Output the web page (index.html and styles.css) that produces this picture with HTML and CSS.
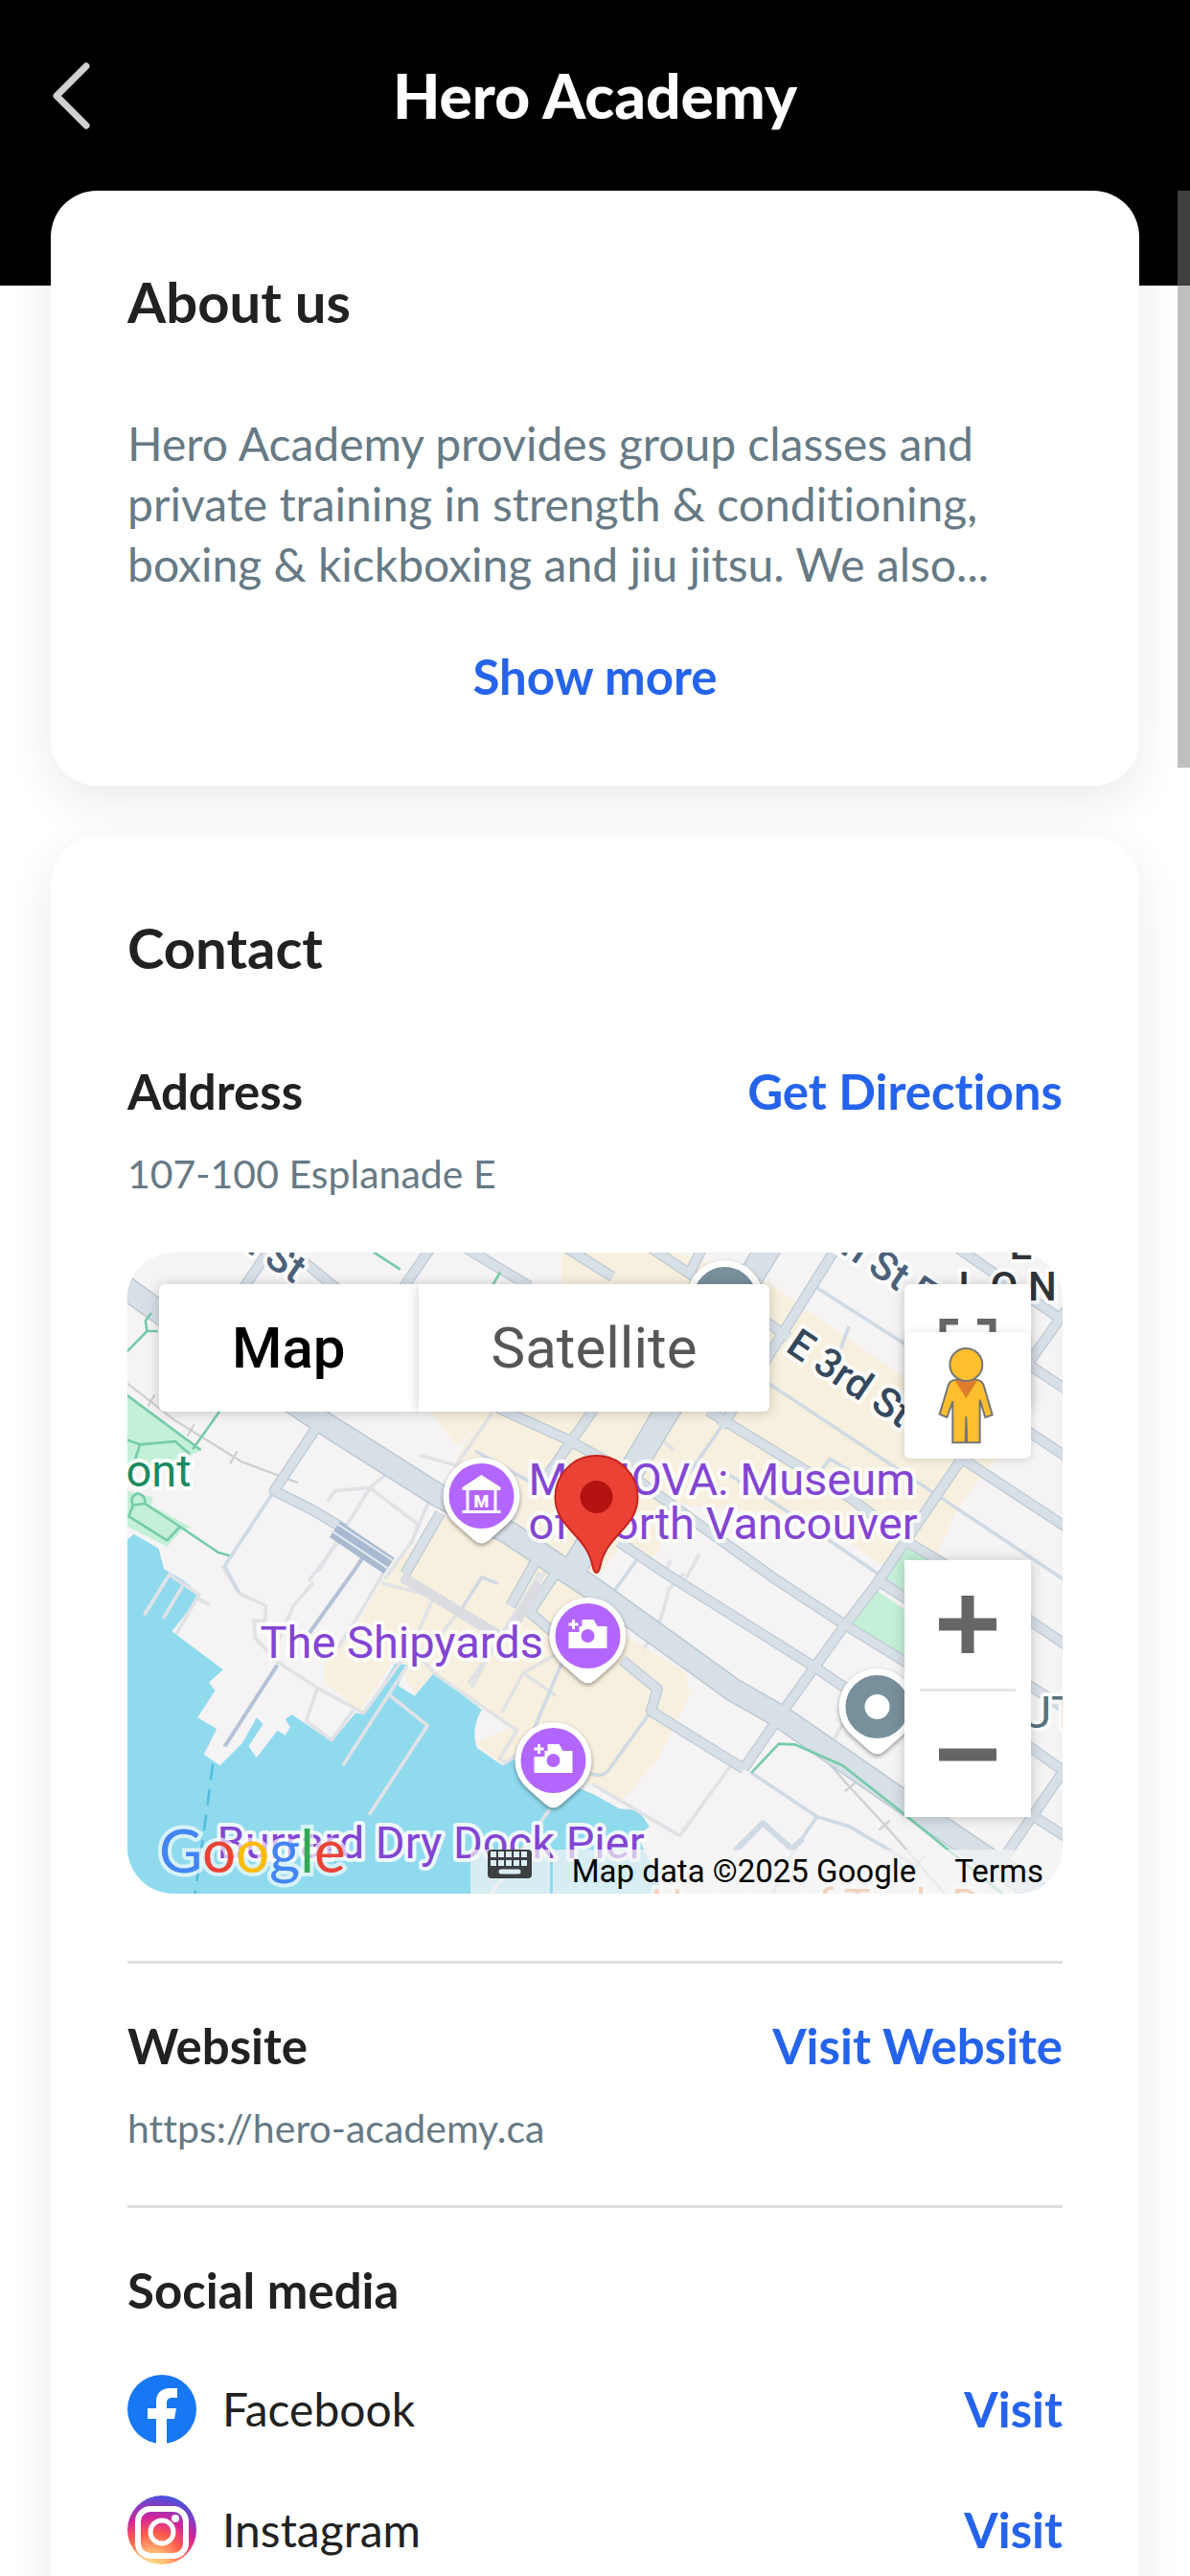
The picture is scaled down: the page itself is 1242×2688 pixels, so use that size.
FILE: index.html
```html
<!DOCTYPE html>
<html lang="en">
<head>
    <meta charset="UTF-8">
    <meta name="viewport" content="width=device-width, initial-scale=1.0">
    <title>Hero Academy</title>
    <link rel="stylesheet" href="styles.css">
</head>
<body>
    <div class="app">
        <header class="topbar">
            <button class="back" type="button" aria-label="Back">
                <svg viewBox="0 0 44 72" width="44" height="72"><path d="M38 5L7 36l31 31"/></svg>
            </button>
            <h1>Hero Academy</h1>
        </header>

        <main class="content">
            <section class="card">
                <h2>About us</h2>
                <p class="about">Hero Academy provides group classes and<br>private training in strength &amp; conditioning,<br>boxing &amp; kickboxing and jiu jitsu. We also...</p>
                <button class="action show-more" type="button">Show more</button>
            </section>

            <section class="card">
                <h2>Contact</h2>

                <div class="row">
                    <h3>Address</h3>
                    <a class="action" href="#">Get Directions</a>
                </div>
                <p class="detail">107-100 Esplanade E</p>

                <div class="map">
                    <svg class="map-canvas" viewBox="0 0 977 669" preserveAspectRatio="xMidYMid slice">
                        <defs>
                            <path id="pin" d="M-40 0A40 40 0 1 1 40 0C40 13 34 23 26 30L8 46Q0 53-8 46L-26 30C-34 23-40 13-40 0Z"/>
                            <g id="camera">
                                <circle r="34" fill="#b366ff"/>
                                <path d="M-20-4V13H20V-10H10L6-17H-6V-10H-9V-4Z" fill="#fff"/>
                                <path d="M-15-17v10M-20-12h10" stroke="#fff" stroke-width="3"/>
                                <circle r="7" fill="#b366ff"/>
                            </g>
                            <g id="wide">
                                <path d="M-20 125L140 240L620 565L1010 812L1240 935L1500 1108L1940 1425L2090 1510L2480 1780L2969 2110"/>
                            </g>
                            <g id="avenue">
                                <path d="M2060 20L1700 600L1440 1040"/>
                            </g>
                            <g id="streets">
                                <path d="M2250 54L2040 390L1900 600"/>
                                <path d="M2700 630L2380 1100L2280 1230L2100 1480L1970 1670"/>
                                <path d="M2990 220L2840 430"/>
                                <path d="M2990 1650L2790 1940"/>
                                <path d="M480 54L400 170"/>
                                <path d="M990 40L900 170"/>
                                <path d="M640 590L500 800L620 860L720 920"/>
                                <path d="M1500 545L1350 760"/>
                                <path d="M1020 870L910 1060"/>
                                <path d="M540 40L700 170"/>
                                <path d="M1100 40L1300 160"/>
                                <path d="M1400 30L1560 130"/>
                                <path d="M1680 40L1800 120L2040 270L2110 320"/>
                                <path d="M1800 120L1840 40"/>
                                <path d="M1200 540L1420 640L1600 740L2060 1070L2280 1215L2500 1350"/>
                                <path d="M1860 550L2300 820L2500 970L2700 1090"/>
                                <path d="M1580 960L1720 1055L2190 1350L2300 1425"/>
                                <path d="M1590 1330L1700 1420L1680 1490L1970 1670"/>
                                <path d="M2640 40L2800 150L2960 260"/>
                                <path d="M2840 390L2990 490"/>
                                <path d="M2840 600L2990 700"/>
                                <path d="M2640 690L2990 920"/>
                                <path d="M2380 1075L2500 1150"/>
                                <path d="M2850 1195L2990 1290"/>
                                <path d="M2850 1400L2990 1490"/>
                                <path d="M2850 1590L2990 1690"/>
                                <path d="M2880 1820L2990 1890"/>
                                <path d="M1250 940L1330 1000L1240 1160M1380 1060L1300 1180L1370 1240"/>
                            </g>
                        </defs>

                        <rect width="977" height="669" fill="#f5f3f4"/>
                        <g class="ground" transform="translate(-13 -18) scale(.33333)">
                            <!-- built-up areas -->
                            <path fill="#f7f0de" d="M1400 54H1760L2040 145L2480 450L2760 700L2640 850L2560 1035L2390 1025L2190 880L1930 860L1760 840L1700 1000L1650 1020L1580 980L1500 1080L1240 930L1270 860L1130 860L1060 720L1125 605L1075 660L985 552H1400Z"/>
                            <path fill="#f7f0de" d="M1040 880L890 1020L840 1080L740 1250L655 1340L660 1400L770 1490L880 1320L940 1440L1000 1370L1240 1540L1130 1590L1215 1660L1350 1640L1590 1770L1700 1640L1750 1540L1800 1440L1790 1370L1610 1260L1500 1140L1250 960Z"/>
                            <!-- parks -->
                            <g fill="#c3f0d6">
                                <path d="M38 500L275 672L235 690L200 720L38 730Z"/>
                                <path d="M38 800L120 820L115 845L240 915L210 925L165 975L38 910Z"/>
                                <path d="M2480 965L2640 1060L2520 1170L2400 1090Z"/>
                                <path d="M2385 1110L2500 1190L2500 1350L2310 1220Z"/>
                            </g>
                            <!-- water -->
                            <path fill="#90daee" d="M38 955L60 935L138 980L155 1045L215 1080L270 1125L180 1240L340 1360L295 1400L315 1425L260 1510L320 1545L280 1625L330 1660L400 1590L445 1510L465 1530L420 1600L445 1635L510 1550L535 1565L550 1540L535 1515L555 1500L680 1585L755 1495L780 1500L880 1340L915 1345L888 1410L940 1442L1000 1370L1150 1485C1130 1520 1120 1560 1135 1605L1215 1660L1250 1640L1380 1700L1500 1750L1580 1795L1640 1800L1675 1850L1640 1880L1660 1930L1700 2000L1710 2061H38Z"/>

                            <!-- footpaths and piers -->
                            <g fill="none" stroke="#e1e2e6" stroke-width="11" stroke-linejoin="round" stroke-linecap="round">
                                <path d="M95 1185L172 1062L265 1125L195 1245M155 1195L215 1095M265 1140L295 1155"/>
                                <path d="M862 1440L980 1535L800 1810M915 1350L718 1655"/>
                                <path d="M510 1335L640 1420L780 1495L900 1330M635 1420L600 1520L680 1580L745 1490"/>
                                <path d="M340 1040L390 1120L475 1160L470 1210L435 1205L440 1260L510 1335"/>
                                <path d="M670 830L690 800L800 790L860 740M800 790L950 905L930 965M700 960L610 1080M800 790L640 1050M990 820L930 960L850 1070"/>
                                <path d="M620 1090L560 1160L500 1300M840 1060L770 1180L700 1290"/>
                                <path d="M960 690L1070 720L1180 560M840 1090L1000 1130L930 1290L1000 1370L1260 1550L1205 1640L1225 1650L1350 1560"/>
                                <path d="M1070 1190L930 1360M1080 1190L1200 1270L1110 1400M1330 1060L1200 1270L1120 1410M1420 1290L1280 1370L1215 1490M1350 1050L1240 1240M1280 1370L1380 1440"/>
                                <path d="M1780 1060L1735 1110L1720 1170L1700 1230L1660 1290M1500 1720L1770 1880L1930 1660"/>
                                <path d="M1700 630L1750 670M1740 1020L1720 1060M1830 1000L1775 1100M2280 1530L2255 1575M1360 1800L1180 2061"/>
                            </g>

                            <!-- railway -->
                            <path fill="none" stroke="#cfcfd3" stroke-width="7" d="M38 462L190 580L400 710L575 775M105 535L125 500M228 628L250 592M362 715L385 675M2190 1600L2300 1725L2420 1855L2600 2061M2288 1740L2322 1712M2394 1862L2428 1832M2505 1975L2535 1945"/>
                            <!-- lanes -->
                            <g fill="none" stroke="#d0dae4" stroke-width="11" stroke-linejoin="round">
                                <path d="M500 800L345 1035L390 1120"/>
                                <path d="M2200 165L2490 350M2050 465L2540 790L2990 1090"/>
                                <path d="M2180 780L2240 700L2335 755M2260 390L2300 285"/>
                                <path d="M1680 1490L1550 1670Q1530 1700 1490 1685"/>
                                <path d="M1990 1680L2200 1820L2300 1850L2520 1980M2200 1820L2130 1920L2060 2061"/>
                                <path d="M1400 1340L1320 1530L1290 1600M1200 1090L1150 1070L1080 1180"/>
                                <path d="M1640 1010L1560 1120M1910 740L2100 860L2450 1100"/>
                                <path d="M1910 585L1740 830M1130 675L1350 800"/>
                                <path stroke-width="18" d="M1940 1930L2030 1840L2120 1920L2155 1890"/>
                                <path stroke-width="12" stroke="#b3c2d6" d="M345 1600L510 1345M610 1245L750 1050L790 990"/>
                            </g>
                            <use href="#streets" class="edge edge-street"/>
                            <use href="#avenue" class="edge edge-avenue"/>
                            <use href="#wide" class="edge edge-wide"/>
                            <use href="#streets" class="fill fill-street"/>
                            <use href="#avenue" class="fill fill-avenue"/>
                            <use href="#wide" class="fill fill-wide"/>
                            <path fill="none" stroke="#dadce2" stroke-width="32" d="M900 1070L1200 1250M1330 1090L1250 1220"/>
                            <!-- station -->
                            <g fill="none" stroke="#a9bad0">
                                <path stroke-width="60" d="M690 920L860 1035"/>
                                <path stroke="#e4e9f0" stroke-width="6" d="M680 925L860 1045M700 905L875 1020"/>
                            </g>
                            <!-- park trails -->
                            <g fill="none" stroke="#76cbaa" stroke-width="8" stroke-linejoin="round">
                                <path d="M38 500L270 672M38 640L80 655L190 645L235 685M80 655L65 700M330 550L245 670"/>
                                <path d="M115 243L97 268L102 300L135 300M102 300L38 365M810 52L895 107M1208 115L1185 155"/>
                                <path d="M58 845L95 840L205 912L165 955L45 880ZM205 912L325 993L360 1003M58 845Q45 820 72 808Q100 815 95 840"/>
                                <path d="M1995 1682L2080 1592L2130 1594L2280 1660L2470 1810L2780 2061"/>
                            </g>
                            <path fill="none" stroke="#52bede" stroke-width="8" stroke-dasharray="50 30" d="M308 1655L285 1830L252 2061"/>
                        </g>

                        <!-- place labels -->
                        <g class="labels">
                            <text class="street" transform="translate(102 -16) rotate(34)">th St</text>
                            <text class="street" transform="translate(732 -8) rotate(34)">th St E</text>
                            <text class="street main" transform="translate(686 102) rotate(34)">E 3rd St</text>
                            <text class="district" x="921" y="7">E</text>
                            <text class="district" x="868" y="50">L O N</text>
                            <text class="green" x="-1" y="244">ont</text>
                            <text class="slate" x="934" y="496">UT</text>
                            <text class="food" x="547" y="697">House of Tech D</text>
                            <text x="419" y="253">MONOVA: Museum</text>
                            <text x="419" y="299">of North Vancouver</text>
                            <text x="139" y="423">The Shipyards</text>
                            <text x="94" y="632">Burrard Dry Dock Pier</text>
                        </g>

                        <g transform="translate(370 254)">
                            <use href="#pin" class="pin"/>
                            <circle r="34" fill="#b366ff"/>
                            <path fill="#fff" d="M-20-9L0-22L20-9V-6H16V15H20V18H-20V15H-16V-6H-20ZM-13-6V15H13V-6Z" fill-rule="evenodd"/>
                            <text class="museum" x="0" y="12">M</text>
                        </g>
                        <g transform="translate(481 400)"><use href="#pin" class="pin"/><use href="#camera"/></g>
                        <g transform="translate(445 530)"><use href="#pin" class="pin"/><use href="#camera"/></g>
                        <g transform="translate(783 474)"><use href="#pin" class="pin"/><circle r="23" fill="#fff" stroke="#78909c" stroke-width="20"/></g>
                        <g transform="translate(624 48)"><use href="#pin" class="pin"/><circle r="23" fill="#fff" stroke="#78909c" stroke-width="20"/></g>

                        <g transform="translate(490 255)">
                            <path d="M0 79C-2 79-3 77-4 72C-11 38-43 33-43 0A43 43 0 0 1 43 0C43 33 11 38 4 72C3 77 2 79 0 79Z" fill="#ea4335" stroke="#c5221f" stroke-width="2"/>
                            <circle r="17" fill="#b31412"/>
                        </g>
                    </svg>

                    <div class="map-types">
                        <button class="map-type active" type="button">Map</button>
                        <button class="map-type" type="button">Satellite</button>
                    </div>

                    <div class="map-tools">
                        <button class="tool fullscreen" type="button" aria-label="Fullscreen">
                            <svg viewBox="0 0 60 60" width="60" height="60"><path d="M4 20V3H20M40 3H56V20M56 40V57H40M20 57H4V40"/></svg>
                        </button>
                        <button class="tool pegman" type="button" aria-label="Street View">
                            <svg viewBox="972 303 396 396" width="132" height="132">
                                <path d="M1130 453Q1113 455 1109 470L1082 560L1105 570L1123 520V649H1163L1165 568L1168 649H1208V515L1225 570L1247 562L1220 470Q1215 455 1200 453Z" fill="#fdbf2d" stroke="#757575" stroke-width="6"/>
                                <path d="M1130 454H1201L1165 510Z" fill="#e07d2d"/>
                                <circle cx="1165" cy="405" r="51" fill="#fdbf2d" stroke="#757575" stroke-width="6"/>
                            </svg>
                        </button>
                    </div>

                    <div class="map-zoom">
                        <button type="button" aria-label="Zoom in">
                            <svg viewBox="0 0 60 60" width="60" height="60"><path d="M30 0V60M0 30H60"/></svg>
                        </button>
                        <button type="button" aria-label="Zoom out">
                            <svg viewBox="0 0 60 60" width="60" height="60"><path d="M0 30H60"/></svg>
                        </button>
                    </div>

                    <a class="google" href="#" aria-label="Google"><span class="b">G</span><span class="r">o</span><span class="y">o</span><span class="b">g</span><span class="g">l</span><span class="r">e</span></a>

                    <div class="map-footer">
                        <button class="keys" type="button" aria-label="Keyboard shortcuts">
                            <svg viewBox="0 0 46 30" width="46" height="30">
                                <rect width="46" height="30" rx="4" fill="#3c4043"/>
                                <path d="M3 5H43M3 14H43" stroke="#dceef3" stroke-width="6" stroke-dasharray="6 2"/>
                                <path d="M14 23H32" stroke="#dceef3" stroke-width="5" stroke-linecap="round"/>
                            </svg>
                        </button>
                        <div class="legal">
                            <span>Map data ©2025 Google</span>
                            <a href="#">Terms</a>
                        </div>
                    </div>
                </div>

                <hr class="after-map">

                <div class="row">
                    <h3>Website</h3>
                    <a class="action" href="#">Visit Website</a>
                </div>
                <p class="detail">https://hero-academy.ca</p>

                <hr>

                <h3>Social media</h3>
                <ul class="social">
                    <li>
                        <svg viewBox="0 0 72 72" width="72" height="72">
                            <circle cx="36" cy="36" r="36" fill="#1877f2"/>
                            <path fill="#fff" d="M30 72V46H21V35H30V28C30 19 36 14 44 14H52V24H47C43 24 41 26 41 29V35H51L49 46H41V72Z"/>
                        </svg>
                        <span>Facebook</span>
                        <a class="action" href="#">Visit</a>
                    </li>
                    <li>
                        <svg viewBox="0 0 72 72" width="72" height="72">
                            <defs>
                                <radialGradient id="insta" cx=".35" cy="1.05" r="1.05">
                                    <stop offset="0" stop-color="#ffe28a"/>
                                    <stop offset=".2" stop-color="#ffc078"/>
                                    <stop offset=".48" stop-color="#ff5b4a"/>
                                    <stop offset=".7" stop-color="#d2249b"/>
                                    <stop offset="1" stop-color="#4a50dc"/>
                                </radialGradient>
                            </defs>
                            <circle cx="36" cy="36" r="36" fill="url(#insta)"/>
                            <rect x="11" y="14" width="50" height="49" rx="13" fill="none" stroke="#fff" stroke-width="6"/>
                            <circle cx="36" cy="38" r="12" fill="none" stroke="#fff" stroke-width="5"/>
                            <circle cx="50" cy="24" r="4" fill="#fff"/>
                        </svg>
                        <span>Instagram</span>
                        <a class="action" href="#">Visit</a>
                    </li>
                </ul>
            </section>
        </main>
        <div class="scrollbar"></div>
    </div>
</body>
</html>
```
FILE: styles.css
```css
* {
    box-sizing: border-box;
}
body {
    margin: 0;
    background: #fff;
    color: #212121;
    font-family: Lato, "Open Sans", sans-serif;
    font-variant-ligatures: none;
}
h1, h2, h3, p, ul {
    margin: 0;
    padding: 0;
}
button {
    padding: 0;
    border: none;
    background: none;
    font-family: inherit;
    cursor: pointer;
}
a {
    text-decoration: none;
}
svg {
    display: block;
}
.app {
    position: relative;
    height: 100vh;
    overflow: hidden;
}

/* header */
.topbar {
    display: grid;
    grid-template-columns: 100px 1fr 100px;
    align-items: center;
    height: 199px;
    padding: 0 52px;
    background: #000;
}
.topbar h1 {
    color: #fff;
    font-size: 64px;
    font-weight: 900;
    line-height: 72px;
    text-align: center;
}
.back path {
    fill: none;
    stroke: #d0d0d0;
    stroke-width: 7;
    stroke-linecap: round;
    stroke-linejoin: round;
}

/* cards */
.content {
    display: flex;
    flex-direction: column;
    gap: 53px;
    padding: 0 53px;
    background: linear-gradient(#000 99px, #fff 99px);
}
.card {
    padding: 80px;
    background: #fff;
    border-radius: 48px;
    box-shadow: 0 16px 48px rgba(30, 35, 70, 0.09);
}
h2 {
    margin-bottom: 80px;
    font-size: 58px;
    font-weight: 700;
    line-height: 72px;
}
h3 {
    font-size: 51px;
    font-weight: 700;
    line-height: 68px;
}
.about {
    color: #667a85;
    font-size: 48px;
    line-height: 63px;
}
.action {
    color: #2563eb;
    font-size: 51px;
    font-weight: 700;
    line-height: 68px;
}
.show-more {
    display: block;
    margin: 52px auto 0;
}
.row {
    display: flex;
    justify-content: space-between;
}
.detail {
    margin-top: 24px;
    color: #667a85;
    font-size: 41px;
    line-height: 56px;
}
hr {
    height: 3px;
    margin: 52px 0;
    border: none;
    background: #dfdfdf;
}
.after-map {
    margin-top: 70px;
}

/* map */
.map {
    position: relative;
    height: 669px;
    margin-top: 54px;
    border-radius: 48px;
    overflow: hidden;
    font-family: Roboto, sans-serif;
}
.map-canvas {
    width: 100%;
    height: 100%;
}
.edge,
.fill {
    fill: none;
    stroke-linejoin: round;
}
.edge {
    stroke: #bcc9d1;
}
.fill {
    stroke: #d7dfe7;
}
.edge-street {
    stroke-width: 34;
}
.fill-street {
    stroke-width: 27;
}
.edge-avenue {
    stroke-width: 82;
}
.fill-avenue {
    stroke-width: 74;
}
.edge-wide {
    stroke-width: 76;
}
.fill-wide {
    stroke-width: 67;
}
.labels text {
    fill: #8345d3;
    stroke: rgba(255, 255, 255, 0.85);
    stroke-width: 8px;
    stroke-linejoin: round;
    paint-order: stroke;
    font-size: 47px;
}
.labels .street {
    fill: #4b617a;
    font-size: 42px;
    font-weight: 500;
}
.labels .main {
    fill: #34495e;
}
.labels .district {
    fill: #303438;
    font-size: 42px;
    font-weight: 500;
}
.labels .green {
    fill: #1b8a61;
}
.labels .slate {
    fill: #55737f;
}
.labels .food {
    fill: #e8873f;
}
.museum {
    fill: #fff;
    font-size: 18px;
    font-weight: 900;
    text-anchor: middle;
}
.pin {
    fill: #fff;
    filter: drop-shadow(0 2px 2px rgba(0, 0, 0, 0.4));
}
.map-types {
    position: absolute;
    top: 33px;
    left: 33px;
    display: flex;
}
.map-type {
    height: 133px;
    padding: 0 76px;
    background: #fff;
    border-radius: 0 6px 6px 0;
    box-shadow: 0 1px 13px rgba(0, 0, 0, 0.2);
    color: #565656;
    font-size: 60px;
}
.map-type.active {
    border-radius: 6px 0 0 6px;
    color: #000;
    font-weight: 500;
}
.map-tools {
    position: absolute;
    top: 33px;
    right: 33px;
    height: 182px;
}
.tool {
    display: grid;
    place-items: center;
    width: 132px;
    height: 132px;
    background: #fff;
    border-radius: 6px;
    box-shadow: 0 1px 13px rgba(0, 0, 0, 0.2);
}
.fullscreen path,
.map-zoom path {
    fill: none;
    stroke: #666;
}
.fullscreen path {
    stroke-width: 7;
}
.pegman {
    position: absolute;
    bottom: 0;
    box-shadow: 0 1px 8px rgba(0, 0, 0, 0.14);
}
.map-zoom {
    position: absolute;
    right: 33px;
    bottom: 80px;
    background: #fff;
    box-shadow: 0 1px 13px rgba(0, 0, 0, 0.2);
}
.map-zoom button {
    display: grid;
    place-items: center;
    width: 100px;
    height: 134px;
    margin: 0 16px;
}
.map-zoom button + button {
    border-top: 3px solid #e6e6e6;
}
.map-zoom path {
    stroke-width: 13;
}
.google {
    position: absolute;
    left: 33px;
    bottom: 14px;
    font-family: Lato, sans-serif;
    font-size: 62px;
    font-weight: 400;
    line-height: 64px;
    -webkit-text-stroke: 8px rgba(255, 255, 255, 0.65);
    paint-order: stroke;
}
.google .b {
    color: #4285f4;
}
.google .r {
    color: #ea4335;
}
.google .y {
    color: #fbbc04;
}
.google .g {
    color: #34a853;
}
.map-footer {
    position: absolute;
    right: 0;
    bottom: 0;
    display: flex;
    gap: 3px;
    height: 46px;
}
.keys {
    display: flex;
    justify-content: center;
    width: 83px;
    background: rgba(245, 245, 245, 0.7);
}
.legal {
    display: flex;
    gap: 40px;
    padding: 0 20px;
    background: rgba(245, 245, 245, 0.7);
    font-size: 33px;
    line-height: 46px;
}
.legal,
.legal a {
    color: #000;
}

/* social links */
.social {
    display: flex;
    flex-direction: column;
    gap: 54px;
    margin-top: 54px;
    list-style: none;
}
.social li {
    display: flex;
    align-items: center;
    gap: 27px;
    height: 72px;
    font-size: 48px;
    line-height: 68px;
}
.social .action {
    margin-left: auto;
}

.scrollbar {
    position: absolute;
    top: 199px;
    right: 0;
    width: 13px;
    height: 602px;
    background: rgba(128, 128, 128, 0.5);
}
```
